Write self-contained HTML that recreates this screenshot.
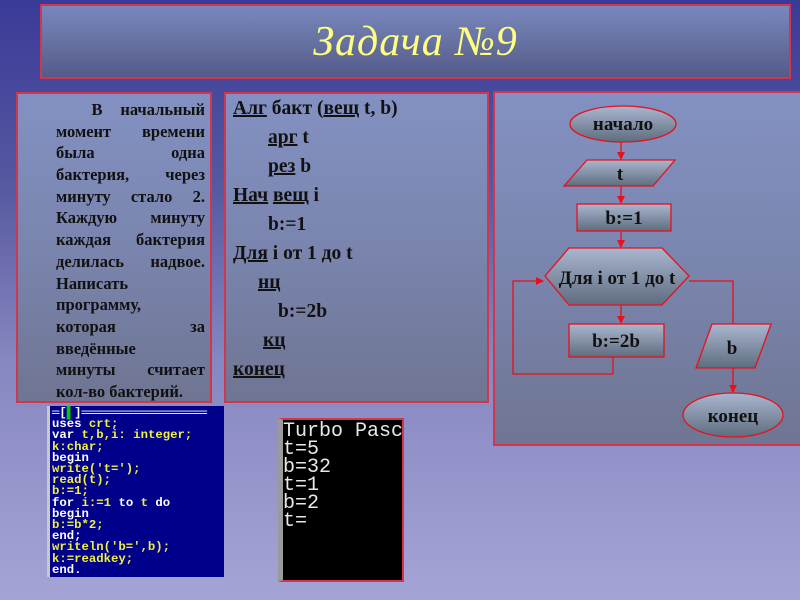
<!DOCTYPE html>
<html><head><meta charset="utf-8"><style>
*{margin:0;padding:0;box-sizing:border-box}
body{width:800px;height:600px;overflow:hidden;position:relative;font-family:"Liberation Serif","DejaVu Serif",serif;
background:linear-gradient(180deg,#3a3a98 0%,#55579f 30%,#8687c0 60%,#a4a4d6 100%);}
.p{position:absolute;border:2px solid #d0364e;background:linear-gradient(180deg,#8391c2 0%,#7a85ae 50%,#6f7592 100%);}
#title{left:40px;top:4px;width:751px;height:75px;background:linear-gradient(180deg,#7987be 0%,#65709f 55%,#545a8a 100%);}
#title div{text-align:center;font-family:"Liberation Serif",serif;font-style:italic;color:#ffff80;font-size:42px;line-height:73px;letter-spacing:1px}
#lp{left:16px;top:92px;width:196px;height:311px}
#lp .t{position:absolute;left:38px;top:5px;width:149px;font-weight:bold;font-size:16.5px;line-height:21.7px;color:#111}
#lp .t div{height:21.7px;white-space:nowrap}
#lp .j{text-align:justify;text-align-last:justify}
#mp{left:224px;top:92px;width:265px;height:311px}
#mp div{position:absolute;left:7px;font-weight:bold;font-size:19.5px;color:#111;white-space:nowrap}
u{text-decoration:underline;text-decoration-thickness:2px}
#rp{left:493px;top:91px;width:310px;height:355px}
#code{position:absolute;left:47px;top:406px;width:177px;height:171px;background:#00008a;border-left:3px solid #c8c8c8;font-family:"Liberation Mono",monospace;font-weight:bold;font-size:12.3px;line-height:11.2px;color:#f0f040;padding:2px 0 0 2px;white-space:pre;overflow:hidden}
#code .w{color:#fff}
#term{position:absolute;left:278px;top:418px;width:126px;height:164px;background:#000;border:2px solid #d0364e;border-left:5px solid #9a9a9a;font-family:"Liberation Mono",monospace;font-size:20px;line-height:18px;color:#e8e8e8;padding:3px 0 0 0;white-space:pre;overflow:hidden}
</style></head><body>
<div class="p" id="title"><div>Задача №9</div></div>
<div class="p" id="lp"><div class="t">
<div class="j">&nbsp;&nbsp;В начальный</div>
<div class="j">момент времени</div>
<div class="j">была одна</div>
<div class="j">бактерия, через</div>
<div class="j">минуту стало 2.</div>
<div class="j">Каждую минуту</div>
<div class="j">каждая бактерия</div>
<div class="j">делилась надвое.</div>
<div>Написать</div>
<div>программу,</div>
<div class="j">которая за</div>
<div>введённые</div>
<div class="j">минуты считает</div>
<div>кол-во бактерий.</div>
</div></div>
<div class="p" id="mp">
<div style="top:4px"><u>Алг</u> бакт (<u>вещ</u> t, b)</div>
<div style="top:33px;left:42px"><u>арг</u> t</div>
<div style="top:62px;left:42px"><u>рез</u> b</div>
<div style="top:91px"><u>Нач</u> <u>вещ</u> i</div>
<div style="top:120px;left:42px">b:=1</div>
<div style="top:149px"><u>Для</u> i от 1 до t</div>
<div style="top:178px;left:32px"><u>нц</u></div>
<div style="top:207px;left:52px">b:=2b</div>
<div style="top:236px;left:37px"><u>кц</u></div>
<div style="top:265px"><u>конец</u></div>
</div>
<div class="p" id="rp"></div>
<svg style="position:absolute;left:0;top:0" width="800" height="600" font-family="Liberation Serif, serif" font-weight="bold" font-size="19" text-anchor="middle">
<defs>
<linearGradient id="g" x1="0" y1="0" x2="0" y2="1"><stop offset="0" stop-color="#a9b6cf"/><stop offset="1" stop-color="#5f6d80"/></linearGradient>
<marker id="a" markerWidth="8" markerHeight="8" refX="7" refY="4" orient="auto" markerUnits="userSpaceOnUse"><path d="M0,0L8,4L0,8z" fill="#e8101a"/></marker>
</defs>
<g stroke="#e8101a" stroke-width="1.3" fill="none">
<line x1="621" y1="141" x2="621" y2="159" marker-end="url(#a)"/>
<line x1="621" y1="186" x2="621" y2="203" marker-end="url(#a)"/>
<line x1="621" y1="231" x2="621" y2="247" marker-end="url(#a)"/>
<line x1="621" y1="305" x2="621" y2="323" marker-end="url(#a)"/>
<polyline points="613,357 613,374 513,374 513,281 543,281" marker-end="url(#a)"/>
<polyline points="689,281 733,281 733,324"/>
<line x1="733" y1="368" x2="733" y2="392" marker-end="url(#a)"/>
</g>
<g stroke="#e8101a" stroke-width="1.3" fill="url(#g)">
<ellipse cx="623" cy="124" rx="53" ry="18"/>
<polygon points="587,160 675,160 653,186 564,186"/>
<rect x="577" y="204" width="94" height="27"/>
<polygon points="569,248 662,248 689,276 662,305 569,305 545,276"/>
<rect x="569" y="324" width="95" height="33"/>
<polygon points="712,324 771,324 755,368 696,368"/>
<ellipse cx="733" cy="415" rx="50" ry="22"/>
</g>
<g fill="#111">
<text x="623" y="130">начало</text>
<text x="620" y="180">t</text>
<text x="624" y="224">b:=1</text>
<text x="617" y="284">Для i от 1 до t</text>
<text x="616" y="347">b:=2b</text>
<text x="732" y="354">b</text>
<text x="733" y="422">конец</text>
</g>
</svg>
<div id="code"><span class="w">═[</span><span style="color:#0c0">▌</span><span class="w">]═════════════════</span>
<span class="w">uses </span>crt;
<span class="w">var </span>t,b,i: integer;
k:char;
<span class="w">begin</span>
write('t=');
read(t);
b:=1;
<span class="w">for </span>i:=1 <span class="w">to </span>t <span class="w">do</span>
<span class="w">begin</span>
b:=b*2;
<span class="w">end;</span>
writeln('b=',b);
k:=readkey;
<span class="w">end.</span></div>
<div id="term">Turbo Pasc
t=5
b=32
t=1
b=2
t=</div>
</body></html>
